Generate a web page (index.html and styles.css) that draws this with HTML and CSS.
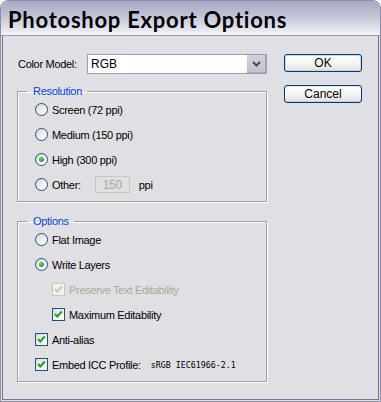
FILE: index.html
```html
<!DOCTYPE html>
<html lang="en">
<head>
    <meta charset="UTF-8">
    <title>Photoshop Export Options</title>
    <link rel="stylesheet" href="styles.css">
</head>
<body>
    <div class="window">
        <div class="titlebar">Photoshop Export Options</div>
        <div class="client">
            <div class="main">
                <div class="field-row">
                    <span class="field-label">Color Model:</span>
                    <div class="select">
                        <span class="select-value">RGB</span>
                        <span class="select-arrow">
                            <svg width="9" height="6" viewBox="0 0 9 6"><polyline points="1,1 4.5,4.5 8,1" fill="none" stroke="#4a4a4a" stroke-width="2"/></svg>
                        </span>
                    </div>
                </div>

                <fieldset class="group">
                    <legend>Resolution</legend>
                    <div class="opt"><span class="radio"></span>Screen (72 ppi)</div>
                    <div class="opt"><span class="radio"></span>Medium (150 ppi)</div>
                    <div class="opt"><span class="radio checked"></span>High (300 ppi)</div>
                    <div class="opt">
                        <span class="radio"></span>Other:
                        <span class="num">150</span>
                        <span class="unit">ppi</span>
                    </div>
                </fieldset>

                <fieldset class="group group-options">
                    <legend>Options</legend>
                    <div class="opt"><span class="radio"></span>Flat Image</div>
                    <div class="opt"><span class="radio checked"></span>Write Layers</div>
                    <div class="opt sub disabled">
                        <span class="check on"><svg width="11" height="11" viewBox="0 0 11 11"><polyline points="2,5 4.3,7.5 8.8,2.5" fill="none" stroke-width="2"/></svg></span>
                        Preserve Text Editability
                    </div>
                    <div class="opt sub">
                        <span class="check on"><svg width="11" height="11" viewBox="0 0 11 11"><polyline points="2,5 4.3,7.5 8.8,2.5" fill="none" stroke-width="2"/></svg></span>
                        Maximum Editability
                    </div>
                    <div class="opt">
                        <span class="check on"><svg width="11" height="11" viewBox="0 0 11 11"><polyline points="2,5 4.3,7.5 8.8,2.5" fill="none" stroke-width="2"/></svg></span>
                        Anti-alias
                    </div>
                    <div class="opt">
                        <span class="check on"><svg width="11" height="11" viewBox="0 0 11 11"><polyline points="2,5 4.3,7.5 8.8,2.5" fill="none" stroke-width="2"/></svg></span>
                        Embed ICC Profile:
                        <span class="profile">sRGB IEC61966-2.1</span>
                    </div>
                </fieldset>
            </div>

            <div class="actions">
                <button class="btn btn-default" type="button">OK</button>
                <button class="btn" type="button">Cancel</button>
            </div>
        </div>
    </div>
</body>
</html>
```

FILE: styles.css
```css
body {
    margin: 0;
    font-family: "Liberation Sans", Arial, sans-serif;
    font-size: 11px;
    color: #000;
    background: #ffffff;
}
.window {
    width: 381px;
    height: 402px;
    box-sizing: border-box;
    border: 1px solid #8e8ea8;
    border-radius: 8px 8px 0 0;
    background: #e0dfe3;
    display: flex;
    flex-direction: column;
    overflow: hidden;
}
.titlebar {
    height: 35px;
    flex: none;
    box-sizing: border-box;
    padding: 2px 0 0 7px;
    border-bottom: 1px solid #9a9ab2;
    background: linear-gradient(#a7a9c5 0%, #bfc1d6 40%, #e6e6ee 85%, #f4f4f8 100%);
    display: flex;
    align-items: center;
    font-family: Lato, "Liberation Sans", sans-serif;
    font-weight: 700;
    font-size: 22px;
    letter-spacing: 0.75px;
}
.client {
    flex: 1;
    margin: 0 1px 1px;
    border: 1px solid #74748a;
    border-top: none;
    display: flex;
    gap: 17px;
    padding: 18px 0 0 14px;
    letter-spacing: -0.3px;
}
.main {
    width: 250px;
    display: flex;
    flex-direction: column;
}
.field-row {
    display: flex;
    align-items: center;
    height: 20px;
    margin-bottom: 11px;
}
.field-label {
    width: 69px;
    padding-left: 1px;
}
.select {
    width: 180px;
    height: 20px;
    box-sizing: border-box;
    border: 1px solid #8ea2bc;
    background: #ffffff;
    display: flex;
    align-items: stretch;
}
.select-value {
    flex: 1;
    display: flex;
    align-items: center;
    padding-left: 3px;
    font-size: 12px;
    letter-spacing: 0;
}
.select-arrow {
    width: 19px;
    border-left: 1px solid #f4f4f6;
    background: linear-gradient(#d2d2da, #c2c2cc);
    box-shadow: inset -1px -1px 0 #a8a8b4;
    display: flex;
    align-items: center;
    justify-content: center;
}
.group {
    margin: 0;
    padding: 0 0 4px 17px;
    border: 1px solid #a0a0a8;
    box-shadow: 1px 1px 0 #ffffff, inset 1px 1px 0 #ffffff;
    min-width: 0;
}
.group legend {
    margin-left: -8px;
    padding: 0 5px 0 6px;
    line-height: 12px;
    color: #0046d5;
}
.group-options {
    margin-top: 13px;
}
.opt {
    display: flex;
    align-items: center;
    height: 25px;
    gap: 4px;
}
.opt.sub {
    padding-left: 17px;
}
.opt.disabled {
    color: #aca899;
}
.radio {
    width: 13px;
    height: 13px;
    box-sizing: border-box;
    flex: none;
    border: 1px solid #1c5180;
    border-radius: 50%;
    background: linear-gradient(135deg, #d4d2cc 0%, #f2f2ee 55%, #ffffff 100%);
    display: flex;
    align-items: center;
    justify-content: center;
}
.radio.checked::after {
    content: "";
    width: 5px;
    height: 5px;
    border-radius: 50%;
    background: radial-gradient(circle at 35% 35%, #5ed25e, #1b8f1b);
}
.check {
    width: 13px;
    height: 13px;
    box-sizing: border-box;
    flex: none;
    border: 1px solid #1c5180;
    background: linear-gradient(135deg, #dcdcd7 0%, #ffffff 90%);
    display: flex;
    align-items: center;
    justify-content: center;
}
.check svg {
    stroke: #21a121;
}
.disabled .check {
    border-color: #cac8bb;
    background: #f2f1ec;
}
.disabled .check svg {
    stroke: #cac8bb;
}
.num {
    width: 35px;
    height: 17px;
    box-sizing: border-box;
    margin-left: 10px;
    border: 1px solid #c9c7ba;
    color: #aca899;
    display: flex;
    align-items: center;
    justify-content: center;
    font-size: 12px;
}
.unit {
    margin-left: 5px;
}
.profile {
    margin-left: 6px;
    font-family: "DejaVu Sans Mono", monospace;
    font-size: 8.3px;
    letter-spacing: 0;
}
.actions {
    display: flex;
    flex-direction: column;
    gap: 13px;
}
.btn {
    width: 78px;
    height: 18px;
    padding: 0;
    border: 1px solid #003c74;
    border-radius: 3px;
    background: linear-gradient(#ffffff 0%, #f4f4f0 55%, #e2e0da 100%);
    font-family: "Liberation Sans", Arial, sans-serif;
    font-size: 12px;
    color: #000;
    box-shadow: inset 0 1px 0 #dce8fa, inset 0 -1px 0 #b8ccee;
}
.btn-default {
    box-shadow: inset 0 0 0 1px #c2d6f4;
}
```
